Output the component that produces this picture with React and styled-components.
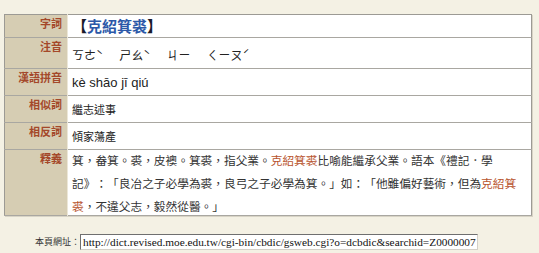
import styled, { createGlobalStyle } from 'styled-components';

const GlobalStyle = createGlobalStyle`
  html, body {
    margin: 0;
    padding: 0;
    background: #f4f1e4;
  }
  body {
    font-family: "Noto Sans CJK TC", "Liberation Serif", serif;
    text-spacing-trim: space-all;
  }
`;

const Page = styled.div`
  width: 539px;
  height: 253px;
  padding: 14px 0 0 4px;
  box-sizing: border-box;
  overflow: hidden;
`;

const EntryTable = styled.table`
  width: 528px;
  border-collapse: collapse;
  border: 1px solid #9c9a94;
  box-shadow: 1px 1px 0 #d8d4c6;
  table-layout: fixed;
`;

const Row = styled.tr`
  height: ${p => p.$h}px;
  border-bottom: 1px solid #a9a7a1;
`;

const Label = styled.th`
  width: 63px;
  box-sizing: border-box;
  padding: 2px 5px 0 0;
  vertical-align: top;
  text-align: right;
  background: #d6cdb3;
  color: #a4482a;
  font-size: 11px;
  font-weight: 700;
  line-height: 13px;
  border-right: 1px solid #ece7d8;
`;

const Cell = styled.td`
  background: #fff;
  padding: 0 4px;
  vertical-align: middle;
  color: #222;
  font-size: 11px;
  line-height: 14px;
`;

const ExplainCell = styled(Cell)`
  vertical-align: top;
`;

const Title = styled.span`
  font-size: 15px;
  font-weight: 700;
  color: #2b58a8;
  line-height: 18px;
`;

const Bracket = styled.span`
  color: #1a1a2a;
`;

const Zhuyin = styled.div`
  display: flex;
  gap: 16px;
  padding-top: 4px;
  font-size: 12px;
  line-height: 18px;
  color: #222;
`;

const Syllable = styled.span`
  white-space: nowrap;
`;

const Pinyin = styled.span`
  font-family: "Liberation Sans", Arial, sans-serif;
  font-size: 13px;
  color: #222;
`;

const Explain = styled.div`
  height: 64px;
  margin-top: -2px;
  font-size: 11.7px;
  line-height: 23px;
  color: #333;
  white-space: nowrap;
`;

const Hit = styled.span`
  color: #b8542e;
`;

const UrlRow = styled.div`
  display: flex;
  align-items: center;
  margin-top: 18px;
  padding-left: 31px;
`;

const UrlLabel = styled.span`
  font-size: 9px;
  line-height: 12px;
  color: #333;
`;

const UrlInput = styled.div`
  width: 398px;
  height: 16px;
  box-sizing: border-box;
  border-top: 1px solid #6f6f6f;
  border-left: 1px solid #6f6f6f;
  border-right: 1px solid #d4d0c8;
  border-bottom: 1px solid #d4d0c8;
  background: #fff;
  font-family: "Liberation Serif", serif;
  font-size: 11.3px;
  line-height: 14px;
  padding-left: 2px;
  white-space: nowrap;
  overflow: hidden;
  color: #111;
`;

export default function App() {
  return (
    <>
      <GlobalStyle />
      <Page>
        <EntryTable>
          <tbody>
            <Row $h={23}>
              <Label>字詞</Label>
              <Cell>
                <Title>
                  <Bracket>【</Bracket>克紹箕裘<Bracket>】</Bracket>
                </Title>
              </Cell>
            </Row>
            <Row $h={31}>
              <Label>注音</Label>
              <Cell>
                <Zhuyin>
                  <Syllable>ㄎㄜˋ</Syllable>
                  <Syllable>ㄕㄠˋ</Syllable>
                  <Syllable>ㄐㄧ</Syllable>
                  <Syllable>ㄑㄧㄡˊ</Syllable>
                </Zhuyin>
              </Cell>
            </Row>
            <Row $h={27}>
              <Label>漢語拼音</Label>
              <Cell>
                <Pinyin>kè shāo jī qiú</Pinyin>
              </Cell>
            </Row>
            <Row $h={27}>
              <Label>相似詞</Label>
              <Cell>繼志述事</Cell>
            </Row>
            <Row $h={27}>
              <Label>相反詞</Label>
              <Cell>傾家蕩產</Cell>
            </Row>
            <Row $h={66}>
              <Label>釋義</Label>
              <ExplainCell>
                <Explain>
                  箕，畚箕。裘，皮襖。箕裘，指父業。<Hit>克紹箕裘</Hit>比喻能繼承父業。語本《禮記．學
                  <br />
                  記》：「良冶之子必學為裘，良弓之子必學為箕。」如：「他雖偏好藝術，但為<Hit>克紹箕</Hit>
                  <br />
                  <Hit>裘</Hit>，不違父志，毅然從醫。」
                </Explain>
              </ExplainCell>
            </Row>
          </tbody>
        </EntryTable>
        <UrlRow>
          <UrlLabel>本頁網址：</UrlLabel>
          <UrlInput>
            http://dict.revised.moe.edu.tw/cgi-bin/cbdic/gsweb.cgi?o=dcbdic&amp;searchid=Z0000007
          </UrlInput>
        </UrlRow>
      </Page>
    </>
  );
}
